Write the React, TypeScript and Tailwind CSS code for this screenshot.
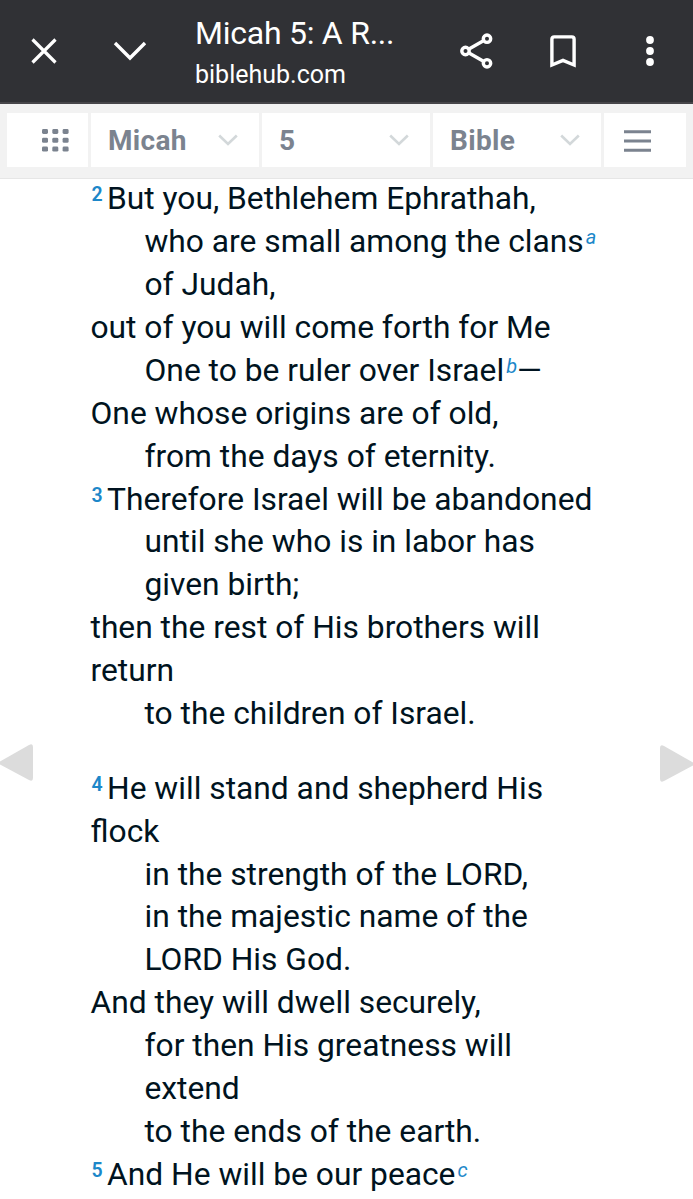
import type { ReactNode } from 'react';

type Line = { text: string; indent?: boolean; verse?: number; note?: string; after?: string };

const STANZAS: Line[][] = [
  [
    { verse: 2, text: "But you, Bethlehem Ephrathah," },
    { indent: true, text: "who are small among the clans", note: "a" },
    { indent: true, text: "of Judah," },
    { text: "out of you will come forth for Me" },
    { indent: true, text: "One to be ruler over Israel", note: "b", after: "—" },
    { text: "One whose origins are of old," },
    { indent: true, text: "from the days of eternity." },
    { verse: 3, text: "Therefore Israel will be abandoned" },
    { indent: true, text: "until she who is in labor has" },
    { indent: true, text: "given birth;" },
    { text: "then the rest of His brothers will" },
    { text: "return" },
    { indent: true, text: "to the children of Israel." },
  ],
  [
    { verse: 4, text: "He will stand and shepherd His" },
    { text: "flock" },
    { indent: true, text: "in the strength of the LORD," },
    { indent: true, text: "in the majestic name of the" },
    { indent: true, text: "LORD His God." },
    { text: "And they will dwell securely," },
    { indent: true, text: "for then His greatness will" },
    { indent: true, text: "extend" },
    { indent: true, text: "to the ends of the earth." },
    { verse: 5, text: "And He will be our peace", note: "c" },
  ],
];

function BrowserBar() {
  return (
    <header className="flex h-[104px] shrink-0 items-center border-b-2 border-[#464549] bg-[#303135] text-white">
      <button className="flex w-[87px] justify-center">
        <svg width="26" height="26" viewBox="0 0 26 26" fill="none" stroke="currentColor" strokeWidth="3.2">
          <path d="M1.5 1.5 24.5 24.5M24.5 1.5 1.5 24.5" />
        </svg>
      </button>
      <button className="flex w-[86px] justify-center">
        <svg width="34" height="20" viewBox="0 0 34 20" fill="none" stroke="currentColor" strokeWidth="3.4">
          <path d="M2 2 17 17 32 2" />
        </svg>
      </button>
      <div className="ml-[22px] w-[238px] pt-[5px] whitespace-nowrap">
        <h1 className="text-[32px] leading-[42px] tracking-[-0.25px]">Micah 5: A R...</h1>
        <p className="text-[25px] leading-[42px]">biblehub.com</p>
      </div>
      <button className="flex w-[86px] justify-center">
        <svg width="34" height="38" viewBox="0 0 34 38" fill="none" stroke="currentColor" strokeWidth="3.4">
          <path d="M10 17 24 9M10 21 24 29" />
          <circle cx="6.5" cy="19" r="3.7" />
          <circle cx="28" cy="6.7" r="3.7" />
          <circle cx="28" cy="31.3" r="3.7" />
        </svg>
      </button>
      <button className="flex w-[87px] justify-center">
        <svg width="26" height="33" viewBox="0 0 26 33" fill="none" stroke="currentColor" strokeWidth="3.4">
          <path d="M1.9 30V4.2q0-2.3 2.3-2.3h17.6q2.3 0 2.3 2.3V30L13 25.4Z" />
        </svg>
      </button>
      <button className="flex w-[87px] justify-center">
        <svg width="8" height="30" viewBox="0 0 8 30" fill="currentColor">
          <circle cx="4" cy="4" r="3.9" />
          <circle cx="4" cy="15" r="3.9" />
          <circle cx="4" cy="26" r="3.9" />
        </svg>
      </button>
    </header>
  );
}

function Picker({ children }: { children: ReactNode }) {
  return (
    <div className="flex h-[54px] w-[168px] items-center justify-between bg-white pr-[21px] pl-[17px]">
      <span className="pt-px tracking-[0.3px]">{children}</span>
      <svg width="20" height="12" viewBox="0 0 20 12" fill="none" stroke="#d3d8da" strokeWidth="2.6">
        <path d="M1.2 1.5 10 10 18.8 1.5" />
      </svg>
    </div>
  );
}

function SiteNav() {
  return (
    <nav className="flex h-[75px] shrink-0 gap-[3px] border-b border-[#e6e6e6] bg-[#f2f2f2] pt-[9px] pl-[7px] text-[28px] font-bold text-[#7b838f]">
      <div className="flex h-[54px] w-[81px] items-center bg-white pl-[35px]">
        <svg width="27" height="23" viewBox="0 0 27 23" fill="currentColor">
          {[0, 8.8, 17.6].map((y) =>
            [0, 10.3, 20.6].map((x) => <rect key={`${x}-${y}`} x={x} y={y} width="6" height="5" rx="1.4" />)
          )}
        </svg>
      </div>
      <Picker>Micah</Picker>
      <Picker>5</Picker>
      <Picker>Bible</Picker>
      <div className="flex h-[54px] w-[82px] items-center bg-white pt-[2px] pl-[20px]">
        <svg width="27" height="22" viewBox="0 0 27 22" stroke="currentColor" strokeWidth="3">
          <path d="M0 1.7h27M0 11h27M0 20.2h27" />
        </svg>
      </div>
    </nav>
  );
}

function VerseLine({ line }: { line: Line }) {
  return (
    <p className={line.indent ? "flex pl-[54px]" : "flex"}>
      {line.verse && (
        <span className="w-[16.5px] pl-px text-[19.5px] leading-[33px] font-semibold text-[#1c87c9]">{line.verse}</span>
      )}
      <span>{line.text}</span>
      {line.note && (
        <i className="pl-[2px] text-[20px] leading-[33px] text-[#1c87c9]">{line.note}</i>
      )}
      {line.after && <span>{line.after}</span>}
    </p>
  );
}

export default function App() {
  return (
    <div className="relative flex h-[1199px] w-[693px] flex-col overflow-hidden bg-white font-[Roboto,sans-serif]">
      <BrowserBar />
      <SiteNav />

      <main className="-mt-[0.6px] pl-[90.5px] text-[31.75px] leading-[42.88px] whitespace-nowrap text-[#001320]">
        {STANZAS.map((lines, i) => (
          <section key={i} className="mb-[32px]">
            {lines.map((line) => (
              <VerseLine key={line.text} line={line} />
            ))}
          </section>
        ))}
      </main>

      {/* previous / next chapter arrows float over the text */}
      <svg className="absolute top-[744px] left-0" width="34" height="38" viewBox="0 0 34 38" fill="#dcdcdc">
        <path d="M0 17.5 29 1q4-2 4 2v31q0 4-4 2L0 20.5Z" />
      </svg>
      <svg className="absolute top-[745px] right-0" width="34" height="38" viewBox="0 0 34 38" fill="#dcdcdc">
        <path d="M34 17.5 5 1Q1 -1 1 3v31q0 4 4 2l29-15.5Z" />
      </svg>
    </div>
  );
}
